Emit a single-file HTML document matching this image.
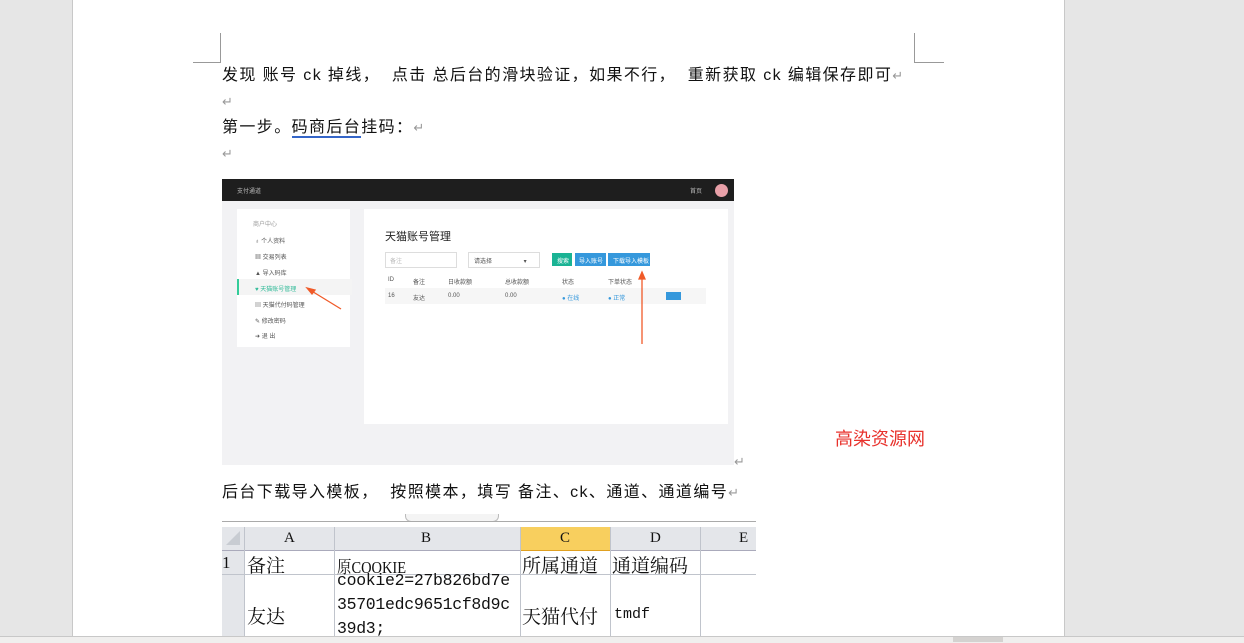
<!DOCTYPE html><html><head><meta charset="utf-8"><style>
body{margin:0;width:1244px;height:642px;background:#e6e6e6;position:relative;overflow:hidden;font-family:"Liberation Sans","Noto Sans CJK SC",sans-serif}
.page{position:absolute;left:72px;top:0;width:991px;height:636px;background:#fff;border-left:1px solid #c8c8c8;border-right:1px solid #c8c8c8}
.a{position:absolute}
.t{position:absolute;font-size:16px;letter-spacing:1.4px;color:#111;white-space:nowrap;line-height:20px;font-family:"Liberation Sans","Noto Sans CJK SC",sans-serif}
.r{color:#999;font-size:13px;letter-spacing:0}
.s{font-size:6px;color:#555;position:absolute;white-space:nowrap}
.x{position:absolute;font-family:"Liberation Serif","Noto Serif CJK SC","Noto Sans CJK SC",serif;font-size:19px;color:#111;white-space:nowrap}
</style></head><body>
<div class="page"></div>
<div class="a" style="left:220px;top:33px;width:1px;height:30px;background:#999"></div>
<div class="a" style="left:193px;top:62px;width:28px;height:1px;background:#999"></div>
<div class="a" style="left:914px;top:33px;width:1px;height:30px;background:#999"></div>
<div class="a" style="left:914px;top:62px;width:30px;height:1px;background:#999"></div>
<div class="t" style="left:222px;top:66px">发现 账号 ck 掉线，&nbsp; 点击 总后台的滑块验证，如果不行，&nbsp; 重新获取 ck 编辑保存即可<span class="r">↵</span></div>
<div class="t r" style="left:222px;top:92px">↵</div>
<div class="t" style="left:222px;top:118px">第一步。<span style="border-bottom:2px solid #3465c8">码商后台</span>挂码：<span class="r">↵</span></div>
<div class="t r" style="left:222px;top:144px">↵</div>
<!-- screenshot -->
<div class="a" style="left:222px;top:179px;width:512px;height:286px;background:#f2f2f4"></div>
<div class="a" style="left:222px;top:179px;width:512px;height:22px;background:#1e1e1e"></div>
<div class="s" style="left:237px;top:186px;color:#bbb">支付通道</div>
<div class="s" style="left:690px;top:186px;color:#bbb">首页</div>
<div class="a" style="left:715px;top:184px;width:13px;height:13px;border-radius:50%;background:#e8a0a8"></div>
<div class="a" style="left:237px;top:209px;width:113px;height:138px;background:#fff"></div>
<div class="s" style="left:253px;top:219px;color:#999">商户中心</div>
<div class="s" style="left:255px;top:236px">♁ 个人资料</div>
<div class="s" style="left:255px;top:252px">▦ 交易列表</div>
<div class="s" style="left:255px;top:268px">▲ 导入码库</div>
<div class="a" style="left:237px;top:279px;width:113px;height:16px;background:#f4f4f4;border-left:2px solid #3c9"></div>
<div class="s" style="left:255px;top:284px;color:#3b9">♥ 天猫账号管理</div>
<div class="s" style="left:255px;top:300px">▤ 天猫代付码管理</div>
<div class="s" style="left:255px;top:316px">✎ 修改密码</div>
<div class="s" style="left:255px;top:331px">➜ 退 出</div>
<div class="a" style="left:364px;top:209px;width:364px;height:215px;background:#fff"></div>
<div class="a" style="left:385px;top:228px;font-size:11px;color:#222;white-space:nowrap">天猫账号管理</div>
<div class="a" style="left:385px;top:252px;width:70px;height:14px;border:1px solid #ddd"></div>
<div class="s" style="left:390px;top:256px;color:#bbb">备注</div>
<div class="a" style="left:468px;top:252px;width:70px;height:14px;border:1px solid #ddd"></div>
<div class="s" style="left:474px;top:256px">请选择 <span style="margin-left:30px">▾</span></div>
<div class="a" style="left:552px;top:253px;width:20px;height:13px;background:#1ab394"></div>
<div class="s" style="left:557px;top:256px;color:#fff">搜索</div>
<div class="a" style="left:575px;top:253px;width:31px;height:13px;background:#3598dc"></div>
<div class="s" style="left:579px;top:256px;color:#fff">导入账号</div>
<div class="a" style="left:608px;top:253px;width:42px;height:13px;background:#3598dc"></div>
<div class="s" style="left:613px;top:256px;color:#fff">下载导入模板</div>
<div class="s" style="left:388px;top:277px">ID</div><div class="s" style="left:413px;top:277px">备注</div><div class="s" style="left:448px;top:277px">日收款额</div><div class="s" style="left:505px;top:277px">总收款额</div><div class="s" style="left:562px;top:277px">状态</div><div class="s" style="left:608px;top:277px">下单状态</div>
<div class="a" style="left:385px;top:288px;width:321px;height:16px;background:#f6f6f6"></div>
<div class="s" style="left:388px;top:293px">16</div><div class="s" style="left:413px;top:293px">友达</div><div class="s" style="left:448px;top:293px">0.00</div><div class="s" style="left:505px;top:293px">0.00</div><div class="s" style="left:562px;top:293px;color:#3598dc">● 在线</div><div class="s" style="left:608px;top:293px;color:#3598dc">● 正常</div>
<div class="a" style="left:666px;top:292px;width:15px;height:8px;background:#3598dc"></div>
<svg class="a" style="left:222px;top:179px" width="512" height="286"><g stroke="#f05a28" stroke-width="1.3" fill="#f05a28"><line x1="119" y1="130" x2="88" y2="111"/><polygon points="85,109 93,111 90,115"/><line x1="420" y1="165" x2="420" y2="97"/><polygon points="420,93 417,100 423,100"/></g></svg>
<div class="t r" style="left:734px;top:452px">↵</div>
<div class="a" style="left:835px;top:425px;font-size:18px;color:#e8322c;white-space:nowrap;font-family:'Noto Sans CJK SC',sans-serif">高染资源网</div>
<div class="t" style="left:222px;top:483px">后台下载导入模板，&nbsp; 按照模本，填写 备注、ck、通道、通道编号<span class="r">↵</span></div>
<!-- excel -->
<div class="a" style="left:405px;top:514px;width:92px;height:7px;border:1px solid #bbb;border-top:none;border-radius:0 0 6px 6px;background:#f4f4f4"></div>
<div class="a" style="left:222px;top:521px;width:534px;height:1px;background:#aaa"></div>
<div class="a" style="left:222px;top:527px;width:534px;height:23px;background:#e4e6ea;border-bottom:1px solid #aab"></div>
<div class="a" style="left:520px;top:527px;width:90px;height:23px;background:#f8cf5e;border-bottom:1px solid #e0a020"></div>
<div class="a" style="left:222px;top:551px;width:22px;height:85px;background:#e4e6ea"></div>
<svg class="a" style="left:222px;top:521px" width="534" height="115"><g stroke="#c0c4cc" stroke-width="1"><line x1="22.5" y1="6" x2="22.5" y2="115"/><line x1="112.5" y1="6" x2="112.5" y2="115"/><line x1="298.5" y1="6" x2="298.5" y2="115"/><line x1="388.5" y1="6" x2="388.5" y2="115"/><line x1="478.5" y1="6" x2="478.5" y2="115"/><line x1="0" y1="53.5" x2="534" y2="53.5"/></g><polygon points="18,10 18,24 4,24" fill="#c8ccd2"/></svg>
<div class="x" style="left:284px;top:530px;font-size:15px">A</div><div class="x" style="left:421px;top:530px;font-size:15px">B</div><div class="x" style="left:560px;top:530px;font-size:15px">C</div><div class="x" style="left:650px;top:530px;font-size:15px">D</div><div class="x" style="left:739px;top:530px;font-size:15px">E</div>
<div class="x" style="left:222px;top:553px;font-size:17px">1</div>
<div class="x" style="left:247px;top:551px">备注</div>
<div class="x" style="left:337px;top:553px;font-size:17px;transform:scaleX(0.85);transform-origin:left">原COOKIE</div>
<div class="x" style="left:522px;top:551px">所属通道</div>
<div class="x" style="left:612px;top:551px">通道编码</div>
<div class="x" style="left:337px;top:569px;font-family:'Liberation Mono',monospace;font-size:16.5px;line-height:24px;letter-spacing:-0.3px">cookie2=27b826bd7e<br>35701edc9651cf8d9c<br>39d3;</div>
<div class="x" style="left:247px;top:602px">友达</div>
<div class="x" style="left:522px;top:602px">天猫代付</div>
<div class="x" style="left:614px;top:606px;font-family:'Liberation Mono',monospace;font-size:15px">tmdf</div>
<div class="a" style="left:0;top:636px;width:1244px;height:6px;background:#f0efee;border-top:1px solid #c8c8c8"></div>
<div class="a" style="left:953px;top:637px;width:50px;height:5px;background:#d4d2d0"></div>
</body></html>
